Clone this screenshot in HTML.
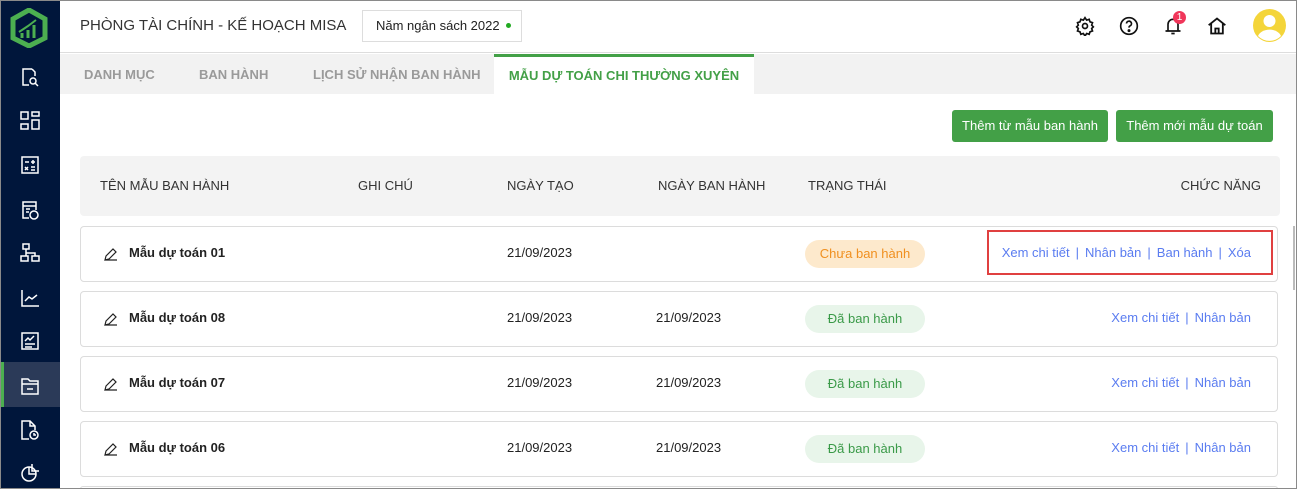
<!DOCTYPE html>
<html style="width:1297px;height:489px;overflow:hidden"><head><meta charset="utf-8"><style>
*{box-sizing:border-box;margin:0;padding:0}
body{width:1297px;height:489px;overflow:hidden;font-family:"Liberation Sans",sans-serif;background:#fff;position:relative;color:#222}
.frame{position:absolute;left:0;top:0;width:1297px;height:489px;border:1px solid #8a8a8a;z-index:50;pointer-events:none}
.side{position:absolute;left:0;top:0;width:60px;height:489px;background:#00163b}
.side svg{position:absolute;left:20px}
.act{position:absolute;left:0;top:362px;width:60px;height:45px;background:#2b3a58;border-left:4px solid #4caf50}
.hdr{position:absolute;left:60px;top:0;right:0;height:53px;border-bottom:1px solid #ddd;background:#fff}
.title{position:absolute;left:20px;top:17px;font-size:15px;color:#333}
.year{position:absolute;left:302px;top:10px;width:160px;height:32px;border:1px solid #ddd;font-size:13px;line-height:30px;padding-left:13px;color:#222}
.year i{display:inline-block;width:5px;height:5px;border-radius:50%;background:#2a2;margin-left:6px;vertical-align:2px}
.tabs{position:absolute;left:60px;top:54px;right:0;height:40px;background:#f2f2f2}
.tab{position:absolute;top:13px;font-size:13px;font-weight:bold;color:#9a9a9a}
.tabA{position:absolute;left:434px;top:0;width:260px;height:40px;background:#fff;border-top:3px solid #43a047;text-align:center;font-size:13px;font-weight:bold;color:#43a047;line-height:38px}
.btn{position:absolute;top:110px;height:32px;background:#43a047;color:#fff;font-size:13px;line-height:32px;text-align:center;border-radius:3px}
.th{position:absolute;left:80px;top:156px;width:1200px;height:60px;background:#f3f3f3;border-radius:4px;font-size:13px;color:#333}
.th span{position:absolute;top:22px}
.row{position:absolute;left:80px;width:1198px;height:56px;border:1px solid #dcdcdc;border-radius:4px;background:#fff;font-size:13px}
.row span{position:absolute;top:18px}
.nm{left:48px;font-weight:bold;color:#222}
.pen{position:absolute;left:23px;top:20px}
.pill{position:absolute;left:724px;top:13px;width:120px;height:28px;border-radius:14px;text-align:center;line-height:28px;font-size:13px}
.g{background:#e8f5ea;color:#3a9a48}
.o{background:#fde9cc;color:#f09020}
.ac{right:26px;color:#5a7cf0}
.ac b{font-weight:normal;color:#5a7cf0;margin:0 6px}
</style></head><body>
<div class="side">
<svg style="left:10px;top:8px" width="38" height="40" viewBox="0 0 38 40"><path d="M19 2 L35 11 V30 L19 38 L3 30 V11 Z" fill="none" stroke="#4caf50" stroke-width="5"/><path d="M12 30 V25 M18 30 V22 M24 30 V17" stroke="#4caf50" stroke-width="3"/><path d="M9 24 L18 18 L26 12" stroke="#4caf50" stroke-width="2" fill="none"/></svg>
<div class="act"></div>
<svg style="top:67px" width="20" height="20" viewBox="0 0 20 20" fill="none" stroke="#fff" stroke-width="1.5"><path d="M12 2H3v16h6"/><path d="M12 2l3 3v4"/><circle cx="13" cy="14" r="3"/><path d="M15 16l3 3"/></svg>
<svg style="top:111px" width="20" height="20" viewBox="0 0 20 20" fill="none" stroke="#fff" stroke-width="1.5"><rect x="1" y="1" width="7" height="7"/><rect x="12" y="1" width="7" height="4"/><rect x="1" y="13" width="7" height="5"/><rect x="12" y="9" width="7" height="9"/></svg>
<svg style="top:155px" width="20" height="20" viewBox="0 0 20 20" fill="none" stroke="#fff" stroke-width="1.5"><rect x="2" y="2" width="16" height="16"/><path d="M5 7h4M13 5v4M11 7h4M5 12l3 3M8 12l-3 3M11 12h4M11 15h4"/></svg>
<svg style="top:200px" width="20" height="20" viewBox="0 0 20 20" fill="none" stroke="#fff" stroke-width="1.5"><path d="M9 18H3V2h13v8"/><path d="M3 6h13M6 9h4M6 12h3"/><circle cx="14" cy="15" r="4"/></svg>
<svg style="top:243px" width="20" height="20" viewBox="0 0 20 20" fill="none" stroke="#fff" stroke-width="1.5"><rect x="3" y="1" width="6" height="5"/><rect x="1" y="13" width="7" height="5"/><rect x="12" y="13" width="7" height="5"/><path d="M6 6v4h9v3M6 10v3"/></svg>
<svg style="top:288px" width="20" height="20" viewBox="0 0 20 20" fill="none" stroke="#fff" stroke-width="1.5"><path d="M2 2v16h17"/><path d="M5 13l4-4 3 2 5-4"/></svg>
<svg style="top:331px" width="20" height="20" viewBox="0 0 20 20" fill="none" stroke="#fff" stroke-width="1.5"><rect x="2" y="2" width="16" height="16"/><path d="M5 10l3-3 2 2 4-4M5 13h10M5 16h7"/></svg>
<svg style="top:376px" width="20" height="20" viewBox="0 0 20 20" fill="none" stroke="#fff" stroke-width="1.5"><path d="M2 3h6l2 2h8v13H2z"/><path d="M2 8h16M7 13h6"/></svg>
<svg style="top:420px" width="20" height="20" viewBox="0 0 20 20" fill="none" stroke="#fff" stroke-width="1.5"><path d="M9 19H2V1h8l5 5v4"/><path d="M10 1v5h5"/><circle cx="14" cy="15" r="4"/><path d="M14 13v2h2"/></svg>
<svg style="top:463px" width="20" height="20" viewBox="0 0 20 20" fill="none" stroke="#fff" stroke-width="1.5"><circle cx="9" cy="11" r="7"/><path d="M9 4v7h7M12 1v7h7"/></svg>
</div>
<div class="hdr">
<div class="title">PHÒNG TÀI CHÍNH - KẾ HOẠCH MISA</div>
<div class="year">Năm ngân sách 2022<i></i></div>
<svg style="position:absolute;left:1015px;top:16px" width="20" height="20" viewBox="0 0 24 24" fill="none" stroke="#111" stroke-width="2"><circle cx="12" cy="12" r="3"/><path d="M12 2l2 3 3-1 1 3 3 1-1 3 2 2-2 2 1 3-3 1-1 3-3-1-2 3-2-3-3 1-1-3-3-1 1-3-2-2 2-2-1-3 3-1 1-3 3 1z"/></svg>
<svg style="position:absolute;left:1059px;top:16px" width="20" height="20" viewBox="0 0 24 24" fill="none" stroke="#111" stroke-width="2"><circle cx="12" cy="12" r="10"/><path d="M9 9a3 3 0 1 1 4 3c-1 .5-1 1-1 2"/><circle cx="12" cy="17.5" r=".8" fill="#111"/></svg>
<svg style="position:absolute;left:1103px;top:16px" width="20" height="20" viewBox="0 0 24 24" fill="none" stroke="#111" stroke-width="2"><path d="M6 18V10a6 6 0 0 1 12 0v8M3 18h18M10 21h4"/></svg>
<div style="position:absolute;left:1113px;top:11px;width:13px;height:13px;border-radius:50%;background:#f0365a;color:#fff;font-size:10px;text-align:center;line-height:13px">1</div>
<svg style="position:absolute;left:1147px;top:16px" width="20" height="20" viewBox="0 0 24 24" fill="none" stroke="#111" stroke-width="2.2"><path d="M2 11L12 3l10 8M5 9v12h14V9M10 21v-6h4v6"/></svg>
<svg style="position:absolute;left:1193px;top:9px" width="33" height="33" viewBox="0 0 33 33"><circle cx="16.5" cy="16.5" r="16.5" fill="#f4d53a"/><circle cx="16.5" cy="12" r="6" fill="#fff"/><path d="M5 27a12 9 0 0 1 23 0a16 16 0 0 1-23 0z" fill="#fff"/></svg>
</div>
<div class="tabs">
<span class="tab" style="left:24px">DANH MỤC</span>
<span class="tab" style="left:139px">BAN HÀNH</span>
<span class="tab" style="left:253px">LỊCH SỬ NHẬN BAN HÀNH</span>
<div class="tabA">MẪU DỰ TOÁN CHI THƯỜNG XUYÊN</div>
</div>
<div class="btn" style="left:952px;width:156px">Thêm từ mẫu ban hành</div>
<div class="btn" style="left:1116px;width:157px">Thêm mới mẫu dự toán</div>
<div class="th"><span style="left:20px">TÊN MẪU BAN HÀNH</span><span style="left:278px">GHI CHÚ</span><span style="left:427px">NGÀY TẠO</span><span style="left:578px">NGÀY BAN HÀNH</span><span style="left:728px">TRẠNG THÁI</span><span style="right:19px">CHỨC NĂNG</span></div>

<div class="row" style="top:226px"><svg class="pen" width="14" height="14" viewBox="0 0 14 14" fill="none" stroke="#222" stroke-width="1.2"><path d="M1 13l1-4 7-7 3 3-7 7zM1 13h12"/></svg><span class="nm">Mẫu dự toán 01</span><span style="left:426px">21/09/2023</span><div class="pill o">Chưa ban hành</div><span class="ac">Xem chi tiết<b>|</b>Nhân bản<b>|</b>Ban hành<b>|</b>Xóa</span></div>
<div style="position:absolute;left:987px;top:230px;width:286px;height:45px;border:2px solid #e04040"></div>
<div class="row" style="top:291px"><svg class="pen" width="14" height="14" viewBox="0 0 14 14" fill="none" stroke="#222" stroke-width="1.2"><path d="M1 13l1-4 7-7 3 3-7 7zM1 13h12"/></svg><span class="nm">Mẫu dự toán 08</span><span style="left:426px">21/09/2023</span><span style="left:575px">21/09/2023</span><div class="pill g">Đã ban hành</div><span class="ac">Xem chi tiết<b>|</b>Nhân bản</span></div>
<div class="row" style="top:356px"><svg class="pen" width="14" height="14" viewBox="0 0 14 14" fill="none" stroke="#222" stroke-width="1.2"><path d="M1 13l1-4 7-7 3 3-7 7zM1 13h12"/></svg><span class="nm">Mẫu dự toán 07</span><span style="left:426px">21/09/2023</span><span style="left:575px">21/09/2023</span><div class="pill g">Đã ban hành</div><span class="ac">Xem chi tiết<b>|</b>Nhân bản</span></div>
<div class="row" style="top:421px"><svg class="pen" width="14" height="14" viewBox="0 0 14 14" fill="none" stroke="#222" stroke-width="1.2"><path d="M1 13l1-4 7-7 3 3-7 7zM1 13h12"/></svg><span class="nm">Mẫu dự toán 06</span><span style="left:426px">21/09/2023</span><span style="left:575px">21/09/2023</span><div class="pill g">Đã ban hành</div><span class="ac">Xem chi tiết<b>|</b>Nhân bản</span></div>
<div class="row" style="top:486px;height:3px;border-bottom:none;border-radius:4px 4px 0 0"></div>
<div style="position:absolute;left:1293px;top:226px;width:2px;height:64px;background:#bbb"></div>
<div class="frame"></div>
</body></html>
